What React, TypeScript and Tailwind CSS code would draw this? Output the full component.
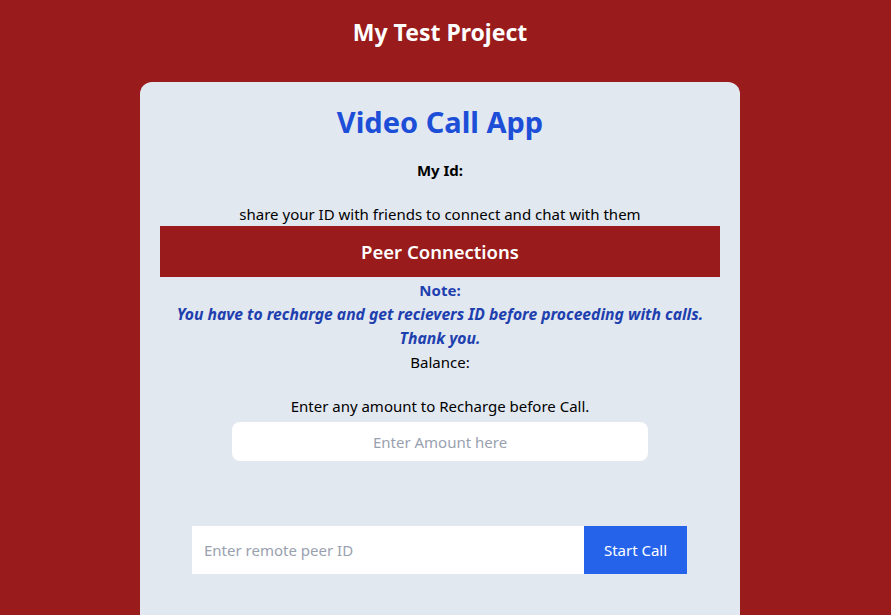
export default function App() {
  return (
    <div
      className="w-screen h-screen overflow-hidden bg-[#991b1b]"
      style={{ fontFamily: '"Noto Sans", "Open Sans", sans-serif' }}
    >
      <div className="w-[880px] flex flex-col items-center">
        <h1 className="mt-4 h-8 leading-8 text-[23px] font-bold text-white">My Test Project</h1>

        <div className="mt-[34px] w-[600px] h-[600px] shrink-0 rounded-xl bg-[#e2e8f0] px-5 pt-[22px] flex flex-col items-center text-center text-black text-[15px]">
          <h2 className="h-9 leading-9 text-[29px] font-bold text-[#1d4ed8]">Video Call App</h2>

          <p className="mt-[18px] leading-6 font-bold">My Id:</p>
          <p className="mt-5 leading-6">share your ID with friends to connect and chat with them</p>

          <div className="w-full h-[51px] bg-[#991b1b] text-white text-[18.5px] font-semibold flex items-center justify-center">
            Peer Connections
          </div>

          <div className="mt-px text-[#1e40af] font-bold leading-6">
            <p>Note:</p>
            <p className="italic text-[15.7px]">You have to recharge and get recievers ID before proceeding with calls.</p>
            <p className="italic text-[15.7px]">Thank you.</p>
          </div>
          <p className="leading-6">Balance:</p>

          <p className="mt-5 leading-6">Enter any amount to Recharge before Call.</p>
          <input
            type="text"
            placeholder="Enter Amount here"
            className="mt-1 w-[416px] h-[39px] rounded-lg bg-white text-center outline-none placeholder:text-gray-400"
          />

          <div className="mt-[65px] mr-px flex">
            <input
              type="text"
              placeholder="Enter remote peer ID"
              className="w-[392px] h-12 bg-white px-3 outline-none placeholder:text-gray-400"
            />
            <button className="w-[103px] h-12 bg-[#2563eb] text-white">Start Call</button>
          </div>
        </div>
      </div>
    </div>
  );
}
